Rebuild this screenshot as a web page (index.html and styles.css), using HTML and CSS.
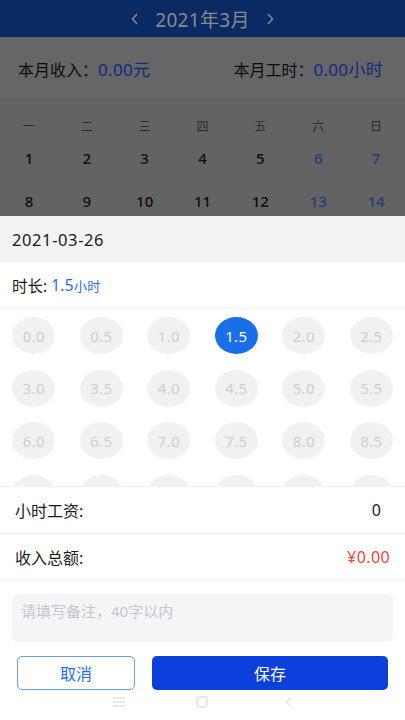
FILE: index.html
```html
<!DOCTYPE html>
<html lang="zh-CN">
<head>
  <meta charset="UTF-8" />
  <meta name="viewport" content="width=device-width, initial-scale=1.0" />
  <title>记工时</title>
  <link rel="stylesheet" href="styles.css">
</head>
<body>
  <div class="page">
    <div class="topbar">
      <svg class="arrow" viewBox="0 0 8 12"><polyline points="6,1 1.5,6 6,11" /></svg>
      <span class="month">2021年3月</span>
      <svg class="arrow" viewBox="0 0 8 12"><polyline points="2,1 6.5,6 2,11" /></svg>
    </div>

    <div class="summary">
      <div>本月收入：<span class="val">0.00元</span></div>
      <div>本月工时：<span class="val">0.00小时</span></div>
    </div>

    <div class="calendar">
      <div class="week">
        <span>一</span><span>二</span><span>三</span><span>四</span><span>五</span><span>六</span><span>日</span>
      </div>
      <div class="days">
        <span>1</span><span>2</span><span>3</span><span>4</span><span>5</span><span class="we">6</span><span class="we">7</span>
        <span>8</span><span>9</span><span>10</span><span>11</span><span>12</span><span class="we">13</span><span class="we">14</span>
      </div>
    </div>
  </div>

  <div class="sheet">
    <div class="date-row">2021-03-26</div>
    <div class="dur-row">时长: <span class="dur">1.5<small>小时</small></span></div>

    <div class="hours">
      <div class="hour-grid" id="hourGrid"></div>
    </div>

    <div class="line-row">
      <span>小时工资:</span>
      <span class="wage">0</span>
    </div>
    <div class="line-row">
      <span>收入总额:</span>
      <span class="total">¥0.00</span>
    </div>

    <div class="note">请填写备注，40字以内</div>

    <div class="actions">
      <button class="btn cancel">取消</button>
      <button class="btn save">保存</button>
    </div>

    <div class="navbar">
      <svg viewBox="0 0 12 10" class="nav-menu"><path d="M0 1h12M0 5h12M0 9h12" /></svg>
      <svg viewBox="0 0 12 12" class="nav-home"><rect x="1" y="1" width="10" height="10" rx="2.5" /></svg>
      <svg viewBox="0 0 8 12" class="nav-back"><polyline points="6.5,1 1.5,6 6.5,11" /></svg>
    </div>
  </div>

  <script>
    const grid = document.getElementById('hourGrid');
    const selected = 1.5;
    for (let i = 0; i < 24; i++) {
      const v = i * 0.5;
      const cell = document.createElement('span');
      cell.className = 'hour' + (v === selected ? ' active' : '');
      cell.textContent = v.toFixed(1);
      grid.appendChild(cell);
    }
  </script>
</body>
</html>
```

FILE: styles.css
```css
* {
  box-sizing: border-box;
}
body {
  margin: 0;
  width: 405px;
  height: 720px;
  overflow: hidden;
  position: relative;
  font-family: "Noto Sans", "Noto Sans CJK SC", sans-serif;
  background: #666;
  color: #111;
}

/* dimmed calendar behind the sheet */
.topbar {
  height: 37px;
  background: #0a2a63;
  display: flex;
  align-items: center;
  justify-content: center;
  gap: 16px;
  color: #8a8a8a;
}
.month {
  font-size: 19px;
  letter-spacing: 0.3px;
}
.arrow {
  width: 8px;
  height: 12px;
  fill: none;
  stroke: #8f8f8f;
  stroke-width: 1.4;
}
.summary {
  height: 61px;
  background: #666;
  display: flex;
  align-items: center;
  justify-content: space-between;
  padding: 2px 22px 0 18px;
  font-size: 16px;
  color: #0c0c0c;
}
.summary .val {
  color: #0d2a82;
  font-size: 17px;
  letter-spacing: 0.3px;
}
.calendar {
  background: #636363;
  padding-top: 19px;
  height: 118px;
}
.week,
.days {
  display: grid;
  grid-template-columns: repeat(7, 1fr);
  text-align: center;
}
.week span {
  height: 20px;
  line-height: 20px;
  font-size: 12px;
  color: #2a2a2a;
}
.days span {
  height: 43px;
  line-height: 43px;
  font-size: 15px;
  font-weight: 500;
  color: #0c0c0c;
}
.days .we {
  color: #203c7a;
}

/* bottom sheet */
.sheet {
  position: absolute;
  top: 216px;
  left: 0;
  right: 0;
  bottom: 0;
  background: #fff;
}
.date-row {
  height: 46px;
  background: #f2f2f2;
  padding-left: 12px;
  display: flex;
  align-items: center;
  font-size: 16.5px;
  letter-spacing: 0.6px;
  color: #1a1a1a;
}
.dur-row {
  height: 47px;
  padding-left: 12px;
  display: flex;
  align-items: center;
  font-size: 15.5px;
  color: #1a1a1a;
  border-bottom: 1px solid #f2f2f2;
  gap: 4px;
}
.dur {
  color: #1e6fe6;
  letter-spacing: 0.3px;
}
.dur small {
  font-size: 13px;
}
.hours {
  height: 178px;
  overflow: hidden;
  padding-top: 8px;
  border-bottom: 1px solid #f0f0f0;
}
.hour-grid {
  display: grid;
  grid-template-columns: repeat(6, 1fr);
  row-gap: 15.5px;
  justify-items: center;
}
.hour {
  width: 43px;
  height: 37px;
  border-radius: 50%;
  background: #f1f1f1;
  color: #cdcdd6;
  font-size: 15px;
  letter-spacing: 0.3px;
  display: flex;
  align-items: center;
  justify-content: center;
}
.hour.active {
  background: #1a6ee8;
  color: #fff;
}
.line-row {
  height: 47px;
  padding: 0 15px;
  display: flex;
  align-items: center;
  justify-content: space-between;
  font-size: 16px;
  color: #1a1a1a;
  border-bottom: 1px solid #f2f2f2;
}
.wage {
  padding-right: 9px;
}
.total {
  color: #f2453e;
  letter-spacing: 0.4px;
}
.note {
  margin: 13px 12px 0;
  height: 48px;
  background: #f5f5f7;
  border-radius: 6px;
  padding: 6px 9px;
  font-size: 15px;
  color: #c3c6cf;
}
.actions {
  display: flex;
  gap: 17px;
  padding: 0 17px;
  margin-top: 14px;
}
.btn {
  height: 34px;
  border-radius: 5px;
  font-family: inherit;
  font-size: 16px;
}
.cancel {
  width: 118px;
  background: #fff;
  border: 1px solid #6b9af0;
  color: #1e6fe6;
}
.save {
  flex: 1;
  background: #0b40dc;
  border: none;
  color: #fff;
}
.navbar {
  display: flex;
  justify-content: center;
  align-items: center;
  height: 20px;
  margin-top: 2px;
}
.navbar svg {
  fill: none;
  stroke: #e2e2e2;
  stroke-width: 1.5;
}
.nav-menu {
  width: 12px;
  height: 10px;
  margin-right: 71px;
}
.nav-home {
  width: 12px;
  height: 12px;
  margin-right: 77px;
}
.nav-back {
  width: 7px;
  height: 12px;
}
```
